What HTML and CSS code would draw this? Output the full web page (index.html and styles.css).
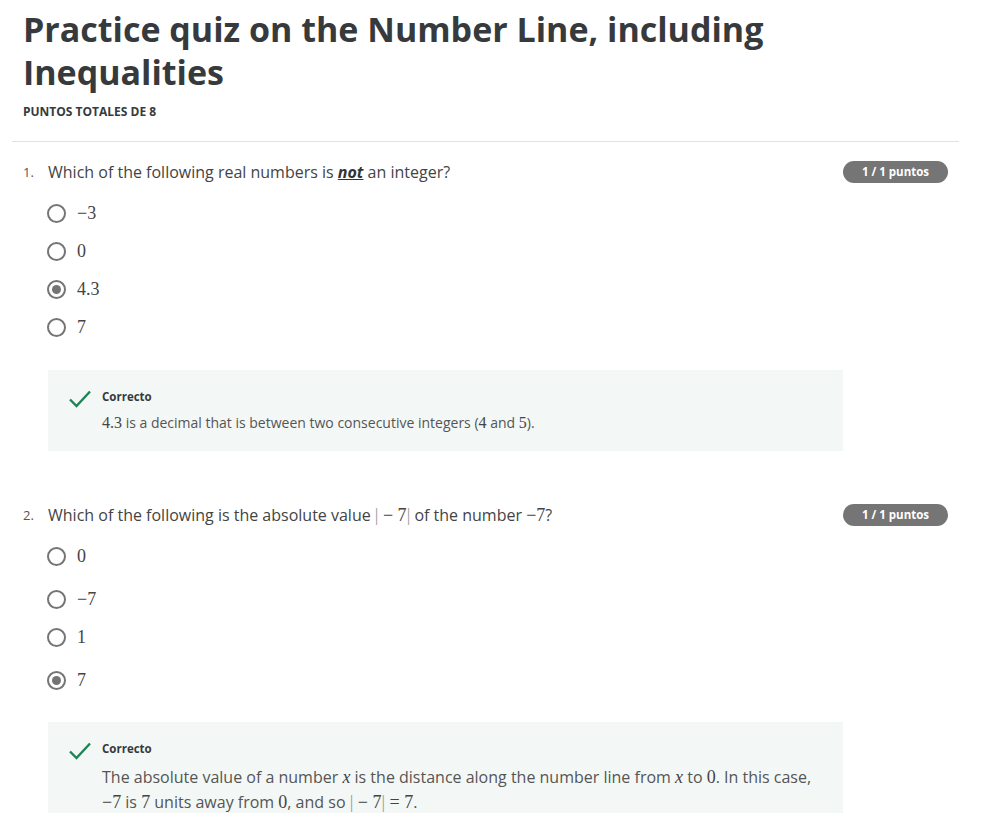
FILE: index.html
```html
<!DOCTYPE html>
<html lang="en">
<head>
<meta charset="utf-8">
<title>Practice quiz on the Number Line, including Inequalities</title>
<link rel="stylesheet" href="styles.css">
</head>
<body>
<div class="page">
  <header class="head">
    <h1 class="title">Practice quiz on the Number Line, including Inequalities</h1>
    <div class="total">PUNTOS TOTALES DE 8</div>
  </header>
  <hr class="divider">

  <section class="question">
    <div class="q-row">
      <span class="q-num">1.</span>
      <div class="q-text">Which of the following real numbers is <em class="em">not</em> an integer?</div>
      <span class="badge">1 / 1 puntos</span>
    </div>
    <ul class="options">
      <li class="option"><span class="radio"></span><span class="math">−3</span></li>
      <li class="option"><span class="radio"></span><span class="math">0</span></li>
      <li class="option"><span class="radio checked"></span><span class="math">4.3</span></li>
      <li class="option"><span class="radio"></span><span class="math">7</span></li>
    </ul>
    <div class="feedback">
      <svg class="check" width="24" height="20" viewBox="0 0 24 20"><path d="M2 10.5 L8.5 17 L22 2.5" fill="none" stroke="#1f8354" stroke-width="2.4"/></svg>
      <div class="fb-body">
        <div class="fb-title">Correcto</div>
        <div class="fb-text small"><span class="math">4.3</span> is a decimal that is between two consecutive integers (<span class="math">4</span> and <span class="math">5</span>).</div>
      </div>
    </div>
  </section>

  <section class="question second">
    <div class="q-row">
      <span class="q-num">2.</span>
      <div class="q-text">Which of the following is the absolute value <span class="math"><span class="bar">|</span> − 7<span class="bar">|</span></span> of the number <span class="math">−7</span>?</div>
      <span class="badge">1 / 1 puntos</span>
    </div>
    <ul class="options">
      <li class="option"><span class="radio"></span><span class="math">0</span></li>
      <li class="option tall"><span class="radio"></span><span class="math">−7</span></li>
      <li class="option"><span class="radio"></span><span class="math">1</span></li>
      <li class="option tall"><span class="radio checked"></span><span class="math">7</span></li>
    </ul>
    <div class="feedback last">
      <svg class="check" width="24" height="20" viewBox="0 0 24 20"><path d="M2 10.5 L8.5 17 L22 2.5" fill="none" stroke="#1f8354" stroke-width="2.4"/></svg>
      <div class="fb-body">
        <div class="fb-title">Correcto</div>
        <div class="fb-text large">The absolute value of a number <span class="math it">x</span> is the distance along the number line from <span class="math it">x</span> to <span class="math">0</span>. In this case, <span class="math">−7</span> is <span class="math">7</span> units away from <span class="math">0</span>, and so <span class="math"><span class="bar">|</span> − 7<span class="bar">|</span> = 7</span>.</div>
      </div>
    </div>
  </section>
</div>
</body>
</html>
```

FILE: styles.css
```css
html, body {
  margin: 0;
  padding: 0;
  background: #ffffff;
}
body {
  font-family: "Open Sans", "Noto Sans", sans-serif;
  color: #373a3c;
  overflow: hidden;
  height: 813px;
}
.page {
  padding: 8px 30px 0 12px;
}
.head {
  padding: 0 11px;
}
.title {
  margin: 0;
  font-size: 34px;
  line-height: 43px;
  font-weight: 700;
  color: #373a3c;
  max-width: 780px;
}
.total {
  margin-top: 10px;
  font-size: 12px;
  font-weight: 700;
  color: #373a3c;
  line-height: 16px;
}
.divider {
  margin: 21px 0 0 0;
  border: 0;
  border-top: 1px solid #e1e1e1;
  height: 0;
}
.question {
  padding: 19px 11px 0 11px;
}
.question.second {
  padding-top: 53px;
}
.q-row {
  display: flex;
  align-items: center;
  height: 22px;
}
.q-num {
  width: 25px;
  font-size: 13px;
  color: #555;
}
.q-text {
  flex: 1;
  font-size: 16px;
  color: #444;
}
.em {
  font-style: italic;
  font-weight: 700;
  text-decoration: underline;
  color: #333;
}
.badge {
  background: #757575;
  color: #fff;
  font-size: 11.5px;
  font-weight: 700;
  border-radius: 11px;
  height: 22px;
  line-height: 22px;
  width: 105px;
  text-align: center;
}
.math {
  font-family: "Liberation Serif", "DejaVu Serif", serif;
  font-size: 18px;
  color: #444;
}
.math.it {
  font-style: italic;
}
.bar {
  color: #999;
}
.options {
  list-style: none;
  margin: 11px 0 0 0;
  padding: 0 0 0 24px;
}
.option {
  display: flex;
  align-items: center;
  height: 38px;
  gap: 11px;
}
.option.tall {
  margin-top: 5px;
}
.radio {
  width: 15px;
  height: 15px;
  border: 2px solid #757575;
  border-radius: 50%;
  box-sizing: content-box;
  position: relative;
  flex: none;
}
.radio.checked::after {
  content: "";
  position: absolute;
  left: 3px;
  top: 3px;
  width: 9px;
  height: 9px;
  border-radius: 50%;
  background: #757575;
}
.feedback {
  margin: 24px 0 0 25px;
  width: 795px;
  box-sizing: border-box;
  background: #f3f8f6;
  display: flex;
  gap: 10px;
  padding: 19px 20px 17px 20px;
}
.question.second .feedback {
  margin-top: 23px;
}
.feedback.last {
  padding-bottom: 4px;
}
.check {
  flex: none;
  margin-top: 0;
}
.fb-title {
  font-size: 11.5px;
  font-weight: 700;
  color: #373a3c;
  line-height: 16px;
}
.fb-text {
  color: #555;
}
.fb-text.small {
  font-size: 14px;
  margin-top: 7px;
  line-height: 22px;
}
.fb-text.small .math {
  font-size: 16px;
}
.fb-text.large {
  font-size: 16px;
  margin-top: 8px;
  line-height: 25px;
}
```
